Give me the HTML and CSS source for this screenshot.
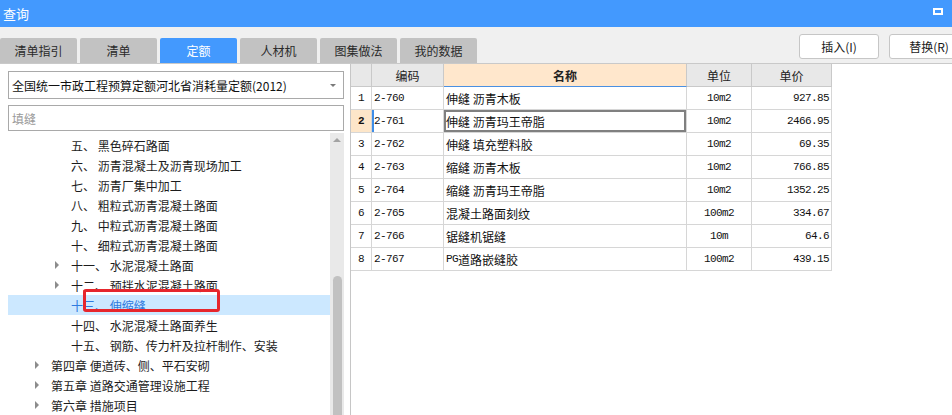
FILE: index.html
```html
<!DOCTYPE html>
<html lang="zh-CN">
<head>
<meta charset="utf-8">
<title>查询</title>
<link rel="stylesheet" href="styles.css">
</head>
<body>
<div class="titlebar">
  <span class="title">查询</span>
  <span class="maxbtn"></span>
</div>
<div class="toolbar">
  <div class="tabs">
    <div class="tab">清单指引</div>
    <div class="tab">清单</div>
    <div class="tab active">定额</div>
    <div class="tab">人材机</div>
    <div class="tab">图集做法</div>
    <div class="tab">我的数据</div>
  </div>
  <div class="actions">
    <button class="btn">插入(I)</button>
    <button class="btn">替换(R)</button>
  </div>
</div>
<div class="main">
  <div class="left">
    <div class="combo"><span>全国统一市政工程预算定额河北省消耗量定额(2012)</span><span class="caret"></span></div>
    <div class="search">填缝</div>
    <div class="treewrap">
      <ul class="tree">
        <li class="node l3"><span class="arrow"></span>五、 黑色碎石路面</li>
        <li class="node l3"><span class="arrow"></span>六、 沥青混凝土及沥青现场加工</li>
        <li class="node l3"><span class="arrow"></span>七、 沥青厂集中加工</li>
        <li class="node l3"><span class="arrow"></span>八、 粗粒式沥青混凝土路面</li>
        <li class="node l3"><span class="arrow"></span>九、 中粒式沥青混凝土路面</li>
        <li class="node l3"><span class="arrow"></span>十、 细粒式沥青混凝土路面</li>
        <li class="node l3"><span class="arrow tri"></span>十一、 水泥混凝土路面</li>
        <li class="node l3"><span class="arrow tri"></span>十二、 预拌水泥混凝土路面</li>
        <li class="node l3 selected"><span class="arrow"></span>十三、 伸缩缝</li>
        <li class="node l3"><span class="arrow"></span>十四、 水泥混凝土路面养生</li>
        <li class="node l3"><span class="arrow"></span>十五、 钢筋、传力杆及拉杆制作、安装</li>
        <li class="node l2"><span class="arrow tri"></span>第四章 便道砖、侧、平石安砌</li>
        <li class="node l2"><span class="arrow tri"></span>第五章 道路交通管理设施工程</li>
        <li class="node l2"><span class="arrow tri"></span>第六章 措施项目</li>
      </ul>
      <div class="scrollbar"><span class="up"></span><span class="thumb"></span></div>
      <div class="mark"></div>
    </div>
  </div>
  <div class="right">
    <div class="grid">
      <div class="hd"></div>
      <div class="hd">编码</div>
      <div class="hd name">名称</div>
      <div class="hd">单位</div>
      <div class="hd">单价</div>

      <div class="c num mono">1</div><div class="c code mono">2-760</div><div class="c txt">伸缝 沥青木板</div><div class="c unit mono">10m2</div><div class="c price mono">927.85</div>
      <div class="c num mono cur">2</div><div class="c code mono curbar">2-761</div><div class="c txt focus">伸缝 沥青玛王帝脂</div><div class="c unit mono">10m2</div><div class="c price mono">2466.95</div>
      <div class="c num mono">3</div><div class="c code mono">2-762</div><div class="c txt">伸缝 填充塑料胶</div><div class="c unit mono">10m2</div><div class="c price mono">69.35</div>
      <div class="c num mono">4</div><div class="c code mono">2-763</div><div class="c txt">缩缝 沥青木板</div><div class="c unit mono">10m2</div><div class="c price mono">766.85</div>
      <div class="c num mono">5</div><div class="c code mono">2-764</div><div class="c txt">缩缝 沥青玛王帝脂</div><div class="c unit mono">10m2</div><div class="c price mono">1352.25</div>
      <div class="c num mono">6</div><div class="c code mono">2-765</div><div class="c txt">混凝土路面刻纹</div><div class="c unit mono">100m2</div><div class="c price mono">334.67</div>
      <div class="c num mono">7</div><div class="c code mono">2-766</div><div class="c txt">锯缝机锯缝</div><div class="c unit mono">10m</div><div class="c price mono">64.6</div>
      <div class="c num mono">8</div><div class="c code mono">2-767</div><div class="c txt"><span class="mono">PG</span>道路嵌缝胶</div><div class="c unit mono">100m2</div><div class="c price mono">439.15</div>
    </div>
  </div>
</div>
</body>
</html>
```
FILE: styles.css
```css
* { box-sizing: border-box; }
html, body {
  margin: 0;
  padding: 0;
  width: 952px;
  height: 415px;
  overflow: hidden;
  background: #f0f0f0;
  font-family: "Noto Sans CJK SC", "Noto Sans", sans-serif;
  font-size: 12px;
  color: #1a1a1a;
  text-spacing-trim: space-all;
}

.titlebar {
  height: 27px;
  background: #4399fe;
  display: flex;
  align-items: center;
  justify-content: space-between;
  color: #fff;
}
.title {
  font-size: 13px;
  padding-left: 3px;
  line-height: 27px;
}
.maxbtn {
  width: 10px;
  height: 7px;
  border: 2px solid #fff;
  margin-right: 9px;
  margin-top: -5px;
}

.toolbar {
  height: 37px;
  display: flex;
  border-bottom: 1px solid #c9c9c9;
  overflow: visible;
}
.tabs {
  display: flex;
  align-self: flex-end;
  gap: 3px;
}
.tab {
  width: 77px;
  height: 25px;
  background: #c2c2c2;
  border-radius: 2px 2px 0 0;
  display: flex;
  align-items: center;
  justify-content: center;
  color: #2a2a2a;
  font-size: 12px;
}
.tab.active {
  background: #4399fe;
  color: #fff;
}
.actions {
  margin-left: auto;
  margin-right: -17px;
  display: flex;
  gap: 10px;
  padding-top: 7px;
}
.btn {
  width: 80px;
  height: 25px;
  background: #fff;
  border: 1px solid #c6c6c6;
  border-radius: 3px;
  font-family: inherit;
  font-size: 12px;
  color: #1a1a1a;
  padding: 0;
}

.main {
  display: flex;
  height: 351px;
  background: #fff;
}
.left {
  width: 350px;
  padding: 7px 0 0 8px;
  background: #fff;
}
.combo {
  width: 336px;
  height: 28px;
  border: 1px solid #a9a9a9;
  display: flex;
  align-items: center;
  justify-content: space-between;
  padding: 0 7px 0 3px;
  color: #111;
}
.caret {
  width: 0;
  height: 0;
  border-left: 3px solid transparent;
  border-right: 3px solid transparent;
  border-top: 3px solid #7a7a7a;
}
.search {
  width: 336px;
  height: 26px;
  margin-top: 6px;
  border: 1px solid #a9a9a9;
  padding-left: 3px;
  display: flex;
  align-items: center;
  color: #9a9a9a;
}

.treewrap {
  position: relative;
  margin-top: 2px;
  width: 336px;
  height: 282px;
  display: flex;
}
.tree {
  list-style: none;
  margin: 0;
  padding: 2px 0 0 0;
  width: 322px;
}
.node {
  height: 20px;
  display: flex;
  align-items: center;
  white-space: pre;
  color: #1c1c1c;
}
.node.l3 { padding-left: 47px; }
.node.l2 { padding-left: 27px; }
.node.selected {
  background: #cce8ff;
  color: #2f7be0;
}
.arrow {
  width: 16px;
  height: 8px;
  flex: none;
  position: relative;
}
.arrow.tri::before {
  content: "";
  position: absolute;
  left: 0;
  top: 0;
  border-left: 4px solid #8c8c8c;
  border-top: 4px solid transparent;
  border-bottom: 4px solid transparent;
}
.scrollbar {
  width: 14px;
  height: 282px;
  background: #e9e9e9;
  display: flex;
  flex-direction: column;
  align-items: center;
}
.up {
  margin-top: 5px;
  width: 0;
  height: 0;
  border-left: 4px solid transparent;
  border-right: 4px solid transparent;
  border-bottom: 4px solid #a3a3a3;
}
.thumb {
  margin-top: 134px;
  width: 9px;
  flex: 1;
  background: #c1c1c1;
  border-radius: 5px 5px 0 0;
}
.mark {
  position: absolute;
  left: 75px;
  top: 156px;
  width: 137px;
  height: 23px;
  border: 3px solid #e6262c;
  border-radius: 3px;
}

.right {
  flex: 1;
  border-left: 1px solid #c6c6c6;
  background: #fff;
}
.grid {
  display: grid;
  grid-template-columns: 21px 72px 243px 65px 80px;
  grid-auto-rows: 23px;
  width: 481px;
}
.hd {
  background: #e8e8e8;
  border-right: 1px solid #c9c9c9;
  border-bottom: 1px solid #c9c9c9;
  display: flex;
  align-items: center;
  justify-content: center;
  font-size: 12px;
  color: #222;
}
.hd.name {
  background: #ffe7cc;
  font-weight: bold;
  border-bottom: 1px solid #4a90e2;
}
.c {
  border-right: 1px solid #d6d6d6;
  border-bottom: 1px solid #d6d6d6;
  display: flex;
  align-items: center;
  white-space: pre;
  color: #111;
}
.mono {
  font-family: "Liberation Mono", "Noto Sans CJK SC", monospace;
  font-size: 11px;
  letter-spacing: -0.6px;
}
.num { justify-content: center; }
.code { padding-left: 2px; }
.txt { padding-left: 2px; font-size: 12px; }
.unit { justify-content: center; }
.price { justify-content: flex-end; padding-right: 2px; }
.cur {
  background: #fde6c9;
  font-weight: bold;
}
.curbar { box-shadow: inset 2px 0 0 #3d8de8; }
.focus { box-shadow: inset 0 0 0 2px #808080; }
```
